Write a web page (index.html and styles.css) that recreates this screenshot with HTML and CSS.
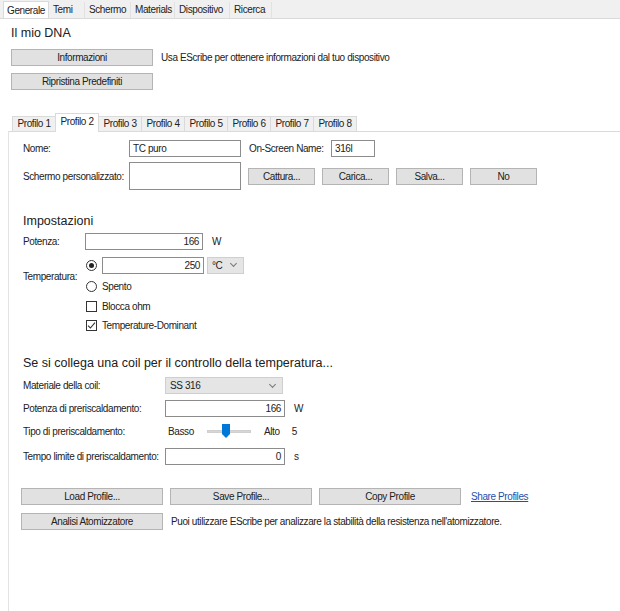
FILE: index.html
```html
<!DOCTYPE html>
<html lang="it">
<head>
    <meta charset="UTF-8">
    <meta name="viewport" content="width=device-width, initial-scale=1.0">
    <title>EScribe</title>
    <link rel="stylesheet" href="styles.css">
</head>
<body>
    <div class="tabstrip">
        <div class="tab active t1">Generale</div>
        <div class="tab t2">Temi</div>
        <div class="tab t3">Schermo</div>
        <div class="tab t4">Materials</div>
        <div class="tab t5">Dispositivo</div>
        <div class="tab t6">Ricerca</div>
    </div>

    <div class="page">
        <h1 class="title">Il mio DNA</h1>
        <div class="row">
            <div class="btn wide">Informazioni</div>
            <span class="note">Usa EScribe per ottenere informazioni dal tuo dispositivo</span>
        </div>
        <div class="row">
            <div class="btn wide">Ripristina Predefiniti</div>
        </div>

        <div class="ptabs">
            <div class="ptab">Profilo 1</div>
            <div class="ptab active">Profilo 2</div>
            <div class="ptab">Profilo 3</div>
            <div class="ptab">Profilo 4</div>
            <div class="ptab">Profilo 5</div>
            <div class="ptab">Profilo 6</div>
            <div class="ptab">Profilo 7</div>
            <div class="ptab">Profilo 8</div>
        </div>

        <div class="panel">
            <div class="frow">
                <span class="lbl l-name">Nome:</span>
                <div class="field w-name">TC puro</div>
                <span class="lbl l-osn">On-Screen Name:</span>
                <div class="field w-osn">316l</div>
            </div>
            <div class="frow custom">
                <span class="lbl l-name">Schermo personalizzato:</span>
                <div class="field w-name tall"></div>
                <div class="btns">
                    <div class="btn small">Cattura...</div>
                    <div class="btn small">Carica...</div>
                    <div class="btn small">Salva...</div>
                    <div class="btn small">No</div>
                </div>
            </div>

            <h2 class="section">Impostazioni</h2>
            <div class="frow">
                <span class="lbl l-set">Potenza:</span>
                <div class="field num w-pow">166</div>
                <span class="unit">W</span>
            </div>
            <div class="tempgrid">
                <span class="lbl temp-lbl">Temperatura:</span>
                <div class="opt">
                    <span class="radio on"></span>
                    <div class="field num w-temp">250</div>
                    <div class="combo w-unit">°C <span class="caret"></span></div>
                </div>
                <div class="opt"><span class="radio"></span>Spento</div>
                <div class="opt"><span class="check"></span>Blocca ohm</div>
                <div class="opt">
                    <span class="check">
                        <svg width="9" height="9" viewBox="0 0 9 9"><path d="M1 4.6 L3.4 7 L8 1.6" fill="none" stroke="#333" stroke-width="1.1"/></svg>
                    </span>Temperature-Dominant
                </div>
            </div>

            <h2 class="section coil">Se si collega una coil per il controllo della temperatura...</h2>
            <div class="frow crow">
                <span class="lbl l-coil">Materiale della coil:</span>
                <div class="combo w-mat">SS 316 <span class="caret"></span></div>
            </div>
            <div class="frow crow">
                <span class="lbl l-coil">Potenza di preriscaldamento:</span>
                <div class="field num w-coil">166</div>
                <span class="unit">W</span>
            </div>
            <div class="frow crow tipo">
                <span class="lbl l-coil">Tipo di preriscaldamento:</span>
                <span class="basso">Basso</span>
                <div class="slider">
                    <span class="track"></span>
                    <span class="thumb"></span>
                </div>
                <span class="alto">Alto</span>
                <span class="level">5</span>
            </div>
            <div class="frow">
                <span class="lbl l-coil">Tempo limite di preriscaldamento:</span>
                <div class="field num w-coil">0</div>
                <span class="unit">s</span>
            </div>

            <div class="frow actions">
                <div class="btn wide">Load Profile...</div>
                <div class="btn wide">Save Profile...</div>
                <div class="btn wide">Copy Profile</div>
                <a class="link" href="#">Share Profiles</a>
            </div>
            <div class="frow analisi">
                <div class="btn wide">Analisi Atomizzatore</div>
                <span class="note">Puoi utilizzare EScribe per analizzare la stabilità della resistenza nell'atomizzatore.</span>
            </div>
        </div>
    </div>
</body>
</html>
```

FILE: styles.css
```css
* {margin: 0; padding: 0; box-sizing: border-box;}
body {
    width: 620px;
    height: 611px;
    overflow: hidden;
    background: #fff;
    color: #222;
    font-family: "Liberation Sans", Arial, sans-serif;
    font-size: 10px;
    letter-spacing: -0.4px;
    white-space: nowrap;
}
.tabstrip {
    display: flex;
    height: 19px;
    padding: 2px 0 0 3px;
    background: #f0f0f0;
    border-bottom: 1px solid #dadada;
}
.tab {
    padding: 2px 0 0 4px;
    height: 16px;
    border-right: 1px solid #e2e2e2;
}
.tab.active {
    background: #fff;
    height: 17px;
    margin-top: -1px;
    padding: 3px 0 0 3px;
    border: 1px solid #dadada;
    border-bottom: none;
}
.t1 {width: 46px;}
.t2 {width: 36px;}
.t3 {width: 46px;}
.t4 {width: 44px;}
.t5 {width: 55px;}
.t6 {width: 42px;}
.page {
    padding: 0 0 0 11px;
}
.title {
    font-weight: normal;
    font-size: 12.5px;
    letter-spacing: 0;
    color: #202020;
    margin: 6px 0 8px 0;
    line-height: 16px;
}
.row {
    display: flex;
    align-items: center;
    height: 17px;
    margin-bottom: 7px;
}
.btn {
    height: 17px;
    line-height: 15px;
    text-align: center;
    background: #e1e1e1;
    border: 1px solid #b4b4b4;
}
.btn.wide {
    width: 142px;
}
.btn.small {
    width: 67px;
}
.note {
    margin-left: 8px;
}
.ptabs {
    display: flex;
    margin: 23px 0 0 1px;
    height: 18px;
    align-items: flex-end;
}
.ptab {
    width: 44px;
    height: 15px;
    line-height: 14px;
    text-align: center;
    background: #f0f0f0;
    border: 1px solid #dadada;
    border-bottom: none;
    margin-right: -1px;
}
.ptab.active {
    height: 19px;
    line-height: 16px;
    background: #fff;
    position: relative;
    top: 1px;
    z-index: 1;
}
.panel {
    margin-left: -3px;
    border-left: 1px solid #e3e3e3;
    border-top: 1px solid #dadada;
    padding: 8px 0 0 14px;
    height: 480px;
}
.frow {
    display: flex;
    align-items: center;
    height: 17px;
}
.custom {
    height: 28px;
    margin-top: 5px;
}
.lbl {
    flex-shrink: 0;
}
.l-name {
    width: 106px;
}
.l-osn {
    width: 82px;
    margin-left: 8px;
}
.l-set {
    width: 62px;
}
.l-coil {
    width: 142px;
}
.field {
    height: 17px;
    line-height: 15px;
    padding: 0 3px;
    border: 1px solid #8c8c8c;
    background: #fff;
}
.field.tall {
    height: 28px;
}
.field.num {
    text-align: right;
}
.w-name {
    width: 112px;
}
.w-osn {
    width: 44px;
}
.w-pow {
    width: 118px;
}
.w-temp {
    width: 102px;
}
.w-coil {
    width: 120px;
}
.btns {
    display: flex;
    gap: 7px;
    margin-left: 7px;
}
.unit {
    margin-left: 9px;
}
.section {
    font-weight: normal;
    font-size: 12.5px;
    letter-spacing: 0;
    color: #202020;
    line-height: 16px;
    margin: 23px 0 4px 0;
}
.section.coil {
    margin: 20px 0 6px 0;
}
.tempgrid {
    display: grid;
    grid-template-columns: 62px auto;
    grid-template-rows: 20px 22px 19px 19px;
    margin-top: 5px;
}
.temp-lbl {
    grid-row: 1 / 3;
    align-self: center;
}
.opt {
    grid-column: 2;
    display: flex;
    align-items: center;
}
.radio {
    width: 11px;
    height: 11px;
    border: 1px solid #333;
    border-radius: 50%;
    margin: 0 5px 0 1px;
    display: flex;
    align-items: center;
    justify-content: center;
}
.radio.on::after {
    content: "";
    width: 5px;
    height: 5px;
    border-radius: 50%;
    background: #222;
}
.check {
    width: 11px;
    height: 11px;
    border: 1px solid #333;
    margin: 0 5px 0 1px;
    display: flex;
    align-items: center;
    justify-content: center;
}
.combo {
    height: 17px;
    line-height: 15px;
    padding: 0 4px;
    background: #e5e5e5;
    border: 1px solid #cfcfcf;
    display: flex;
    align-items: center;
    justify-content: space-between;
}
.w-unit {
    width: 37px;
    margin-left: 3px;
}
.w-mat {
    width: 118px;
}
.caret {
    width: 5px;
    height: 5px;
    border-right: 1px solid #777;
    border-bottom: 1px solid #777;
    transform: rotate(45deg);
    margin: -3px 3px 0 0;
}
.crow {
    margin-bottom: 6px;
}
.tipo {
    margin: 1px 0 8px 0;
}
.basso {
    margin-left: 3px;
    width: 39px;
}
.slider {
    position: relative;
    width: 44px;
    height: 15px;
}
.track {
    position: absolute;
    left: 0;
    right: 0;
    top: 6px;
    height: 3px;
    background: #d6d6d6;
    border: 1px solid #cfcfcf;
}
.thumb {
    position: absolute;
    left: 15px;
    top: 0;
    width: 8px;
    height: 14px;
    background: #0078d7;
    clip-path: polygon(0 0, 100% 0, 100% 72%, 50% 100%, 0 72%);
}
.alto {
    margin-left: 13px;
}
.level {
    margin-left: 12px;
}
.actions {
    margin: 23px 0 8px -2px;
    gap: 7px;
}
.analisi {
    margin-left: -2px;
}
.link {
    color: #1f4fa8;
    margin-left: 3px;
}
```
